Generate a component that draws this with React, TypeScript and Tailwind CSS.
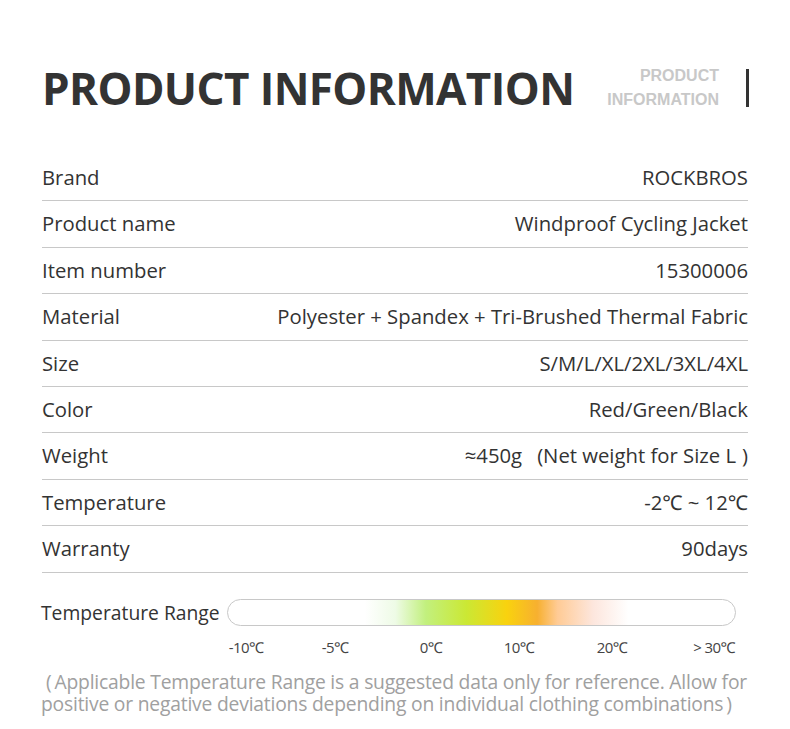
import React from "react";

const rows: [string, React.ReactNode][] = [
  ["Brand", "ROCKBROS"],
  ["Product name", "Windproof Cycling Jacket"],
  ["Item number", "15300006"],
  ["Material", "Polyester + Spandex + Tri-Brushed Thermal Fabric"],
  ["Size", "S/M/L/XL/2XL/3XL/4XL"],
  ["Color", "Red/Green/Black"],
  [
    "Weight",
    <>
      ≈450g<span className="ml-[15px]">(Net weight for Size L</span>
      <span className="ml-[6px]">)</span>
    </>,
  ],
  ["Temperature", "-2℃ ~ 12℃"],
  ["Warranty", "90days"],
];

export default function App() {
  return (
    <div
      className="w-[790px] h-[729px] bg-white overflow-hidden text-[#333]"
      style={{ fontFamily: '"Open Sans", "Noto Sans", sans-serif' }}
    >
      <div className="px-[42px] pt-[62px]">
        <div className="flex items-center justify-between h-[52px]">
          <div className="text-[44px] font-bold leading-none text-[#333] tracking-[-0.6px]">
            PRODUCT INFORMATION
          </div>
          <div className="flex items-center">
            <div
              className="text-right text-[16px] font-bold leading-[24px] text-[#c8c8c8]"
              style={{ fontFamily: '"Liberation Sans", Arial, sans-serif' }}
            >
              <div>PRODUCT</div>
              <div>INFORMATION</div>
            </div>
            <div className="ml-[27px] w-[3px] h-[38px] bg-[#333] mr-[-1px]" />
          </div>
        </div>

        <div className="mt-[41px]">
          {rows.map(([k, v]) => (
            <div
              key={k}
              className="flex items-center justify-between h-[46.4px] border-b border-[#c8c8c8] text-[20.3px] pb-[1px]"
            >
              <span>{k}</span>
              <span>{v}</span>
            </div>
          ))}
        </div>

        <div className="flex items-center mt-[26px]">
          <span className="text-[19.3px] w-[186px] ml-[-1px]">Temperature Range</span>
          <div
            className="h-[27px] w-[509px] rounded-full border border-[#c8c8c8]"
            style={{
              background:
                "linear-gradient(to right, #ffffff 0%, #ffffff 27%, #eefbe6 33%, #c2f07e 39%, #cbe834 47%, #f9d20e 55%, #f7b030 61%, #ffcb95 65%, #fde6dd 72%, #ffffff 79%, #ffffff 100%)",
            }}
          />
        </div>

        <div className="flex text-[15px] text-[#444] mt-[10px] leading-[20px] tracking-[-0.6px]">
          <span className="ml-[174px] w-[60px] text-center">-10℃</span>
          <span className="ml-[29px] w-[60px] text-center">-5℃</span>
          <span className="ml-[36px] w-[60px] text-center">0℃</span>
          <span className="ml-[28px] w-[60px] text-center">10℃</span>
          <span className="ml-[33px] w-[60px] text-center">20℃</span>
          <span className="ml-[42px] w-[60px] text-center">&gt; 30℃</span>
        </div>

        <div className="mt-[14px] text-[19.3px] leading-[22px] text-[#a0a0a0] ml-[-1px] tracking-[-0.2px]">
          <div className="pl-[5px]">(<span className="ml-[3px]">Applicable Temperature Range is a suggested data only for reference. Allow for</span></div>
          <div>positive or negative deviations depending on individual clothing combinations<span className="ml-[3px]">)</span></div>
        </div>
      </div>
    </div>
  );
}
